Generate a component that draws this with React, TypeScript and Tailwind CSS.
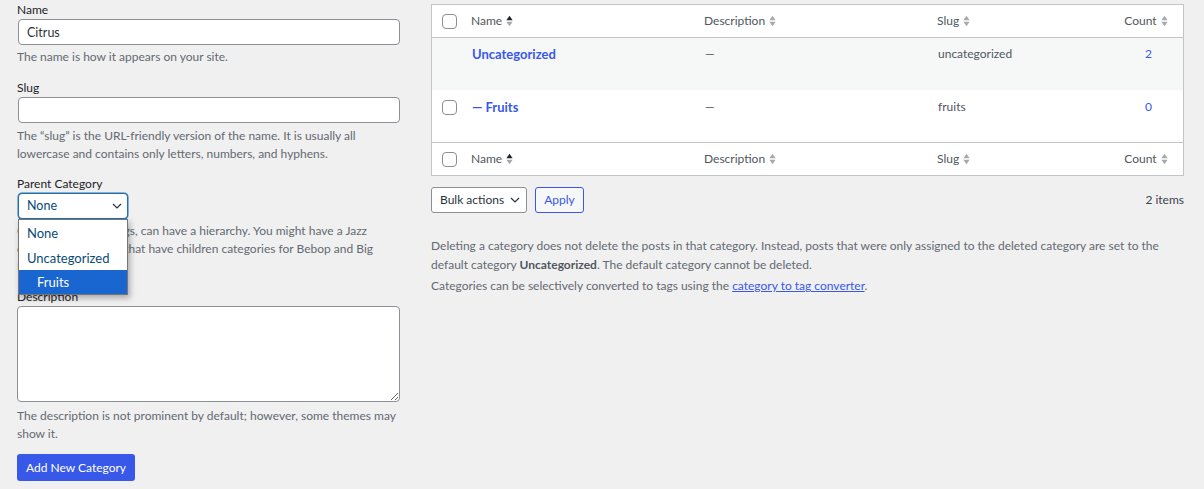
import React from "react";

function Sort({ active }: { active?: boolean }) {
  return (
    <svg width="7" height="12" viewBox="0 0 7 12" className="ml-[4px] shrink-0">
      <path d="M3.5 0.8 L6.6 5.2 H0.4 Z" fill={active ? "#1d2327" : "#a7aaad"} />
      <path d="M0.4 6.8 H6.6 L3.5 11.2 Z" fill="#a7aaad" />
    </svg>
  );
}

function Chevron() {
  return (
    <svg width="10" height="6" viewBox="0 0 10 6" className="shrink-0">
      <path d="M1 1 L5 5 L9 1" stroke="#2c3338" strokeWidth="1.2" fill="none" />
    </svg>
  );
}

function Check() {
  return <span className="block h-[15px] w-[15px] rounded-[4px] border border-[#8c8f94] bg-white" />;
}

function HeadRow({ top }: { top?: boolean }) {
  return (
    <div
      className={
        "grid h-[33px] grid-cols-[31px_233px_233px_1fr_72px] items-center text-[#50575e] " +
        (top ? "border-b border-[#c3c4c7]" : "border-t border-[#c3c4c7]")
      }
    >
      <div className="pl-[10px]">
        <Check />
      </div>
      <div className="flex items-center pl-[8px]">
        Name
        <Sort active />
      </div>
      <div className="flex items-center pl-[8px]">
        Description
        <Sort />
      </div>
      <div className="flex items-center pl-[8px]">
        Slug
        <Sort />
      </div>
      <div className="flex items-center justify-center pr-[2px]">
        Count
        <Sort />
      </div>
    </div>
  );
}

export default function App() {
  return (
    <div className="min-h-[489px] w-full bg-[#f0f0f1] font-[family-name:Lato,sans-serif] text-[12px] leading-[18px] text-[#3c434a]">
      <div className="flex gap-[31px] pl-[17px] pr-[20px]">
        {/* Left form */}
        <div className="w-[383px] shrink-0">
          <div className="mb-[12px]">
            <label className="block leading-[19px] text-[#1d2327]">Name</label>
            <input
              defaultValue="Citrus"
              className="ml-px block h-[26px] w-[382px] rounded-[4px] border border-[#8c8f94] bg-white px-[8px] text-[12.5px] text-[#2c3338] outline-none"
            />
            <p className="mt-[3px] text-[#646970]">The name is how it appears on your site.</p>
          </div>
          <div className="mb-[11px]">
            <label className="block leading-[19px] text-[#1d2327]">Slug</label>
            <input className="ml-px block h-[26px] w-[382px] rounded-[4px] border border-[#8c8f94] bg-white px-[8px] text-[12px] outline-none" />
            <p className="mt-[4px] text-[#646970]">
              The “slug” is the URL-friendly version of the name. It is usually all lowercase and contains only
              letters, numbers, and hyphens.
            </p>
          </div>
          <div className="mb-[11px]">
            <label className="block leading-[19px] text-[#1d2327]">Parent Category</label>
            <div className="relative ml-px w-[110px]">
              <div className="flex h-[26px] items-center justify-between rounded-[4px] border border-[#2271b1] bg-white pl-[8px] pr-[5px] text-[12.5px] text-[#0a4b78] shadow-[0_0_0_0.5px_#2271b1]">
                <span>None</span>
                <Chevron />
              </div>
              <div className="absolute left-0 top-[26px] z-10 w-[110px] border border-[#767676] bg-white text-[13px] text-[#0a4b78] shadow-[2px_3px_6px_rgba(0,0,0,0.3)]">
                <div className="flex h-[25px] items-center pl-[8px]">None</div>
                <div className="flex h-[25px] items-center pl-[8px]">Uncategorized</div>
                <div className="flex h-[24px] items-center bg-[#1a66d0] pl-[18px] text-white">Fruits</div>
              </div>
            </div>
            <p className="mt-[3px] text-[#646970]">
              Categories, unlike tags, can have a hierarchy. You might have a Jazz category, and under that have
              children categories for Bebop and Big
              <br />
              Band.
            </p>
          </div>
          <div className="mb-[11px]">
            <label className="block leading-[19px] text-[#1d2327]">Description</label>
            <textarea className="block h-[96px] w-[383px] rounded-[4px] border border-[#8c8f94] bg-white px-[8px] py-[4px] outline-none" />
            <p className="mt-[5px] text-[#646970]">
              The description is not prominent by default; however, some themes may show it.
            </p>
          </div>
          <button className="h-[27px] rounded-[3px] bg-[#3858e9] px-[9px] text-[12px] text-white">
            Add New Category
          </button>
        </div>

        {/* Right list */}
        <div className="min-w-0 flex-1 pt-[4px]">
          <div className="border border-[#c3c4c7] bg-white">
            <HeadRow top />
            <div className="grid h-[52px] grid-cols-[31px_233px_233px_1fr_72px] bg-[#f6f7f7] pt-[7px]">
              <div />
              <div className="pl-[9px] text-[13px] font-bold text-[#3858e9]">Uncategorized</div>
              <div className="pl-[9px] text-[#50575e]">—</div>
              <div className="pl-[9px] text-[#50575e]">uncategorized</div>
              <div className="pl-[3px] text-center text-[#3858e9]">2</div>
            </div>
            <div className="grid h-[52px] grid-cols-[31px_233px_233px_1fr_72px] pt-[8px]">
              <div className="pl-[10px] pt-[2px]">
                <Check />
              </div>
              <div className="pl-[9px] text-[13px] font-bold text-[#3858e9]">— Fruits</div>
              <div className="pl-[9px] text-[#50575e]">—</div>
              <div className="pl-[9px] text-[#50575e]">fruits</div>
              <div className="pl-[3px] text-center text-[#3858e9]">0</div>
            </div>
            <HeadRow />
          </div>

          <div className="mt-[11px] flex h-[26px] items-center">
            <div className="flex h-[26px] w-[96px] items-center justify-between rounded-[3px] border border-[#8c8f94] bg-white pl-[8px] pr-[6px] text-[#2c3338]">
              <span>Bulk actions</span>
              <Chevron />
            </div>
            <button className="ml-[8px] h-[26px] w-[49px] rounded-[3px] border border-[#3858e9] bg-[#f6f7f7] text-[12px] text-[#3858e9]">
              Apply
            </button>
            <span className="ml-auto text-[#3c434a]">2 items</span>
          </div>

          <p className="mt-[23px] leading-[19px] text-[#646970]">
            Deleting a category does not delete the posts in that category. Instead, posts that were only assigned
            to the deleted category are set to the default category{" "}
            <strong className="font-bold text-[#50575e]">Uncategorized</strong>. The default category cannot be
            deleted.
          </p>
          <p className="mt-[2px] leading-[19px] text-[#646970]">
            Categories can be selectively converted to tags using the{" "}
            <a className="text-[#3858e9] underline">category to tag converter</a>.
          </p>
        </div>
      </div>
    </div>
  );
}
